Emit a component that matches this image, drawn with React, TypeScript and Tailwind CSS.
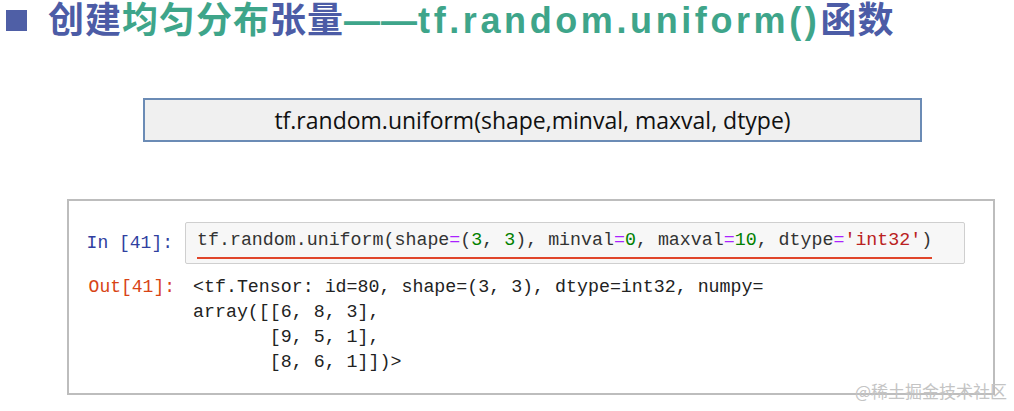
const mono = { fontFamily: '"Liberation Mono", "DejaVu Sans Mono", monospace' };

function Code() {
  return (
    <span className="border-b-2 border-[#e0452a] pb-[2px] whitespace-pre text-[#333]">
      tf.random.uniform(shape<span className="text-[#aa22ff]">=</span>(
      <span className="text-[#008000]">3</span>, <span className="text-[#008000]">3</span>), minval
      <span className="text-[#aa22ff]">=</span>
      <span className="text-[#008000]">0</span>, maxval<span className="text-[#aa22ff]">=</span>
      <span className="text-[#008000]">10</span>, dtype<span className="text-[#aa22ff]">=</span>
      <span className="text-[#ba2121]">'int32'</span>)
    </span>
  );
}

export default function App() {
  const blue = 'text-[#4c5ca6]';
  const green = 'text-[#3ea58a]';
  return (
    <div className="relative w-[1014px] h-[411px] overflow-hidden bg-white">
      {/* title */}
      <div className="flex items-center h-[40px] pl-[6px] pt-[1px]">
        <div className="w-[21px] h-[21px] bg-[#4f5fa6]" />
        <h1
          className="ml-[21px] text-[36px] leading-none font-bold tracking-[1px] whitespace-pre"
          style={{ fontFamily: '"Liberation Sans", "Noto Sans CJK SC", sans-serif' }}
        >
          <span className={blue}>创建</span>
          <span className={green}>均匀分布</span>
          <span className={blue}>张量</span>
          <span className={green}>——</span>
          <span className={`${green} tracking-[3.6px]`}>tf.random.uniform()</span>
          <span className={blue}>函数</span>
        </h1>
      </div>

      {/* signature box */}
      <div className="mt-[58px] ml-[143px] w-[779px] h-[44px] border-2 border-[#6b8bb5] bg-[#f0f0f0] flex items-center justify-center">
        <span
          className="text-[23px] text-[#111]"
          style={{ fontFamily: '"Open Sans", "Liberation Sans", sans-serif' }}
        >
          tf.random.uniform(shape,minval, maxval, dtype)
        </span>
      </div>

      {/* notebook cell */}
      <div className="mt-[57px] ml-[67px] w-[928px] h-[196px] border-2 border-[#bdbdbd] pt-[21px]" style={mono}>
        <div className="flex items-center">
          <div className="w-[116px] pr-[12px] text-right text-[18px] text-[#303f9f] whitespace-pre">In [41]:</div>
          <div className="w-[780px] h-[42px] rounded-[2px] border border-[#cfcfcf] bg-[#f7f7f7] flex items-center pl-[11px] text-[18.3px]">
            <Code />
          </div>
        </div>
        <div className="flex mt-[11px] text-[18.3px] leading-[25px]">
          <div className="w-[124px] pr-[18px] text-right text-[18px] text-[#d84315]">Out[41]:</div>
          <pre className="text-[#222] whitespace-pre" style={mono}>
{`<tf.Tensor: id=80, shape=(3, 3), dtype=int32, numpy=
array([[6, 8, 3],
       [9, 5, 1],
       [8, 6, 1]])>`}
          </pre>
        </div>
      </div>

      {/* watermark */}
      <div
        className="absolute right-[7px] bottom-[8px] text-[17px] text-[#c4c4c4]"
        style={{ fontFamily: '"Noto Sans CJK SC", sans-serif' }}
      >
        @稀土掘金技术社区
      </div>
    </div>
  );
}
